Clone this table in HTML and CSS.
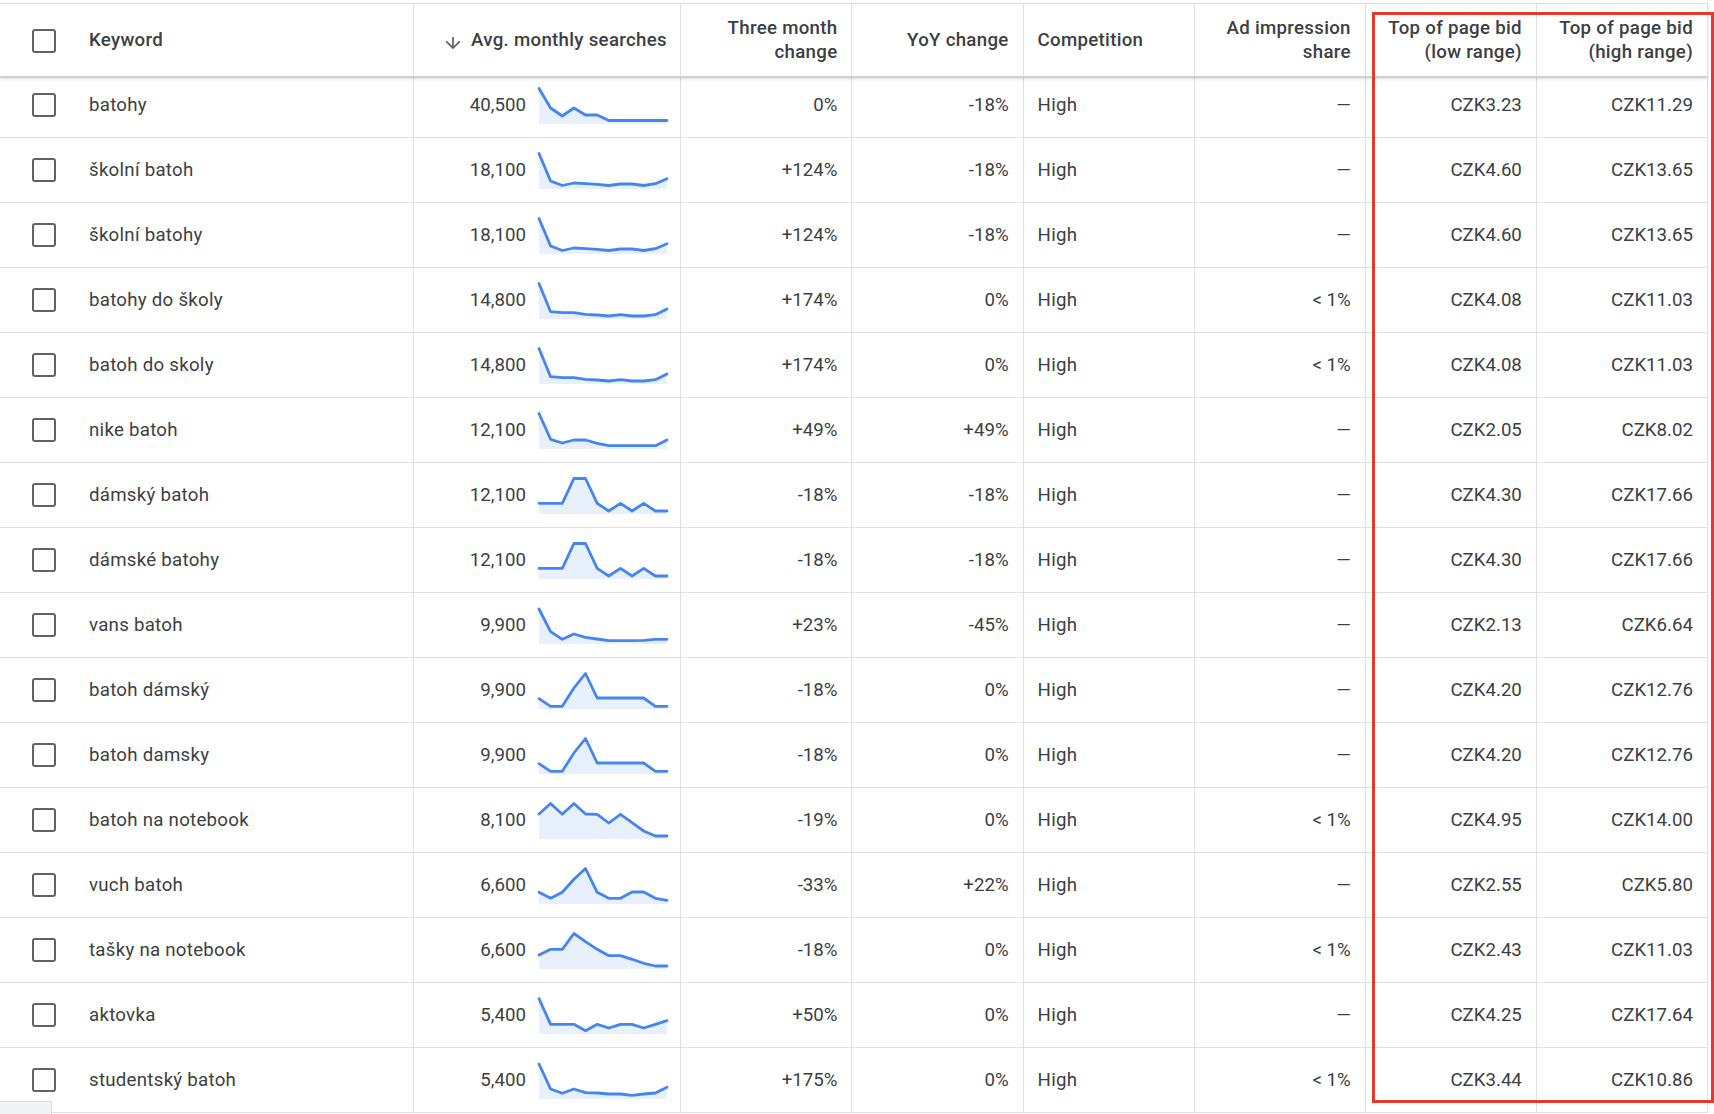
FILE: index.html
```html
<!DOCTYPE html>
<html lang="cs">
<head>
<meta charset="utf-8">
<title>Keyword ideas</title>
<link rel="stylesheet" href="styles.css">
</head>
<body>
<div class="page">
  <div class="table">
    <div class="row head">
      <div class="cell kw"><span class="cb"></span><span>Keyword</span></div>
      <div class="cell num avg"><svg class="sort" viewBox="0 0 16 12"><path d="M8 0V10.8M1.2 4.3L8 11.1L14.8 4.3"/></svg><span>Avg. monthly searches</span></div>
      <div class="cell num">Three month<br>change</div>
      <div class="cell num">YoY change</div>
      <div class="cell">Competition</div>
      <div class="cell num">Ad impression<br>share</div>
      <div class="cell num">Top of page bid<br>(low range)</div>
      <div class="cell num">Top of page bid<br>(high range)</div>
    </div>

    <div class="row r">
      <div class="cell kw"><span class="cb"></span><span>batohy</span></div>
      <div class="cell num avg"><span>40,500</span><svg class="spark" viewBox="0 0 128 36"><polygon class="area" points="0,0.5 11.6,20 23.3,28 34.9,20 46.5,27 58.2,27 69.8,32.5 81.5,32.5 93.1,32.5 104.7,32.5 116.4,32.5 128,32.5 128,36 0,36"/><polyline class="line" points="0,0.5 11.6,20 23.3,28 34.9,20 46.5,27 58.2,27 69.8,32.5 81.5,32.5 93.1,32.5 104.7,32.5 116.4,32.5 128,32.5"/></svg></div>
      <div class="cell num">0%</div>
      <div class="cell num">-18%</div>
      <div class="cell comp">High</div>
      <div class="cell num">—</div>
      <div class="cell num">CZK3.23</div>
      <div class="cell num">CZK11.29</div>
    </div>

    <div class="row r">
      <div class="cell kw"><span class="cb"></span><span>školní batoh</span></div>
      <div class="cell num avg"><span>18,100</span><svg class="spark" viewBox="0 0 128 36"><polygon class="area" points="0,0.5 11.6,28 23.3,32.5 34.9,30 46.5,30.7 58.2,31.3 69.8,32.5 81.5,31 93.1,31 104.7,32.5 116.4,30.7 128,25.7 128,36 0,36"/><polyline class="line" points="0,0.5 11.6,28 23.3,32.5 34.9,30 46.5,30.7 58.2,31.3 69.8,32.5 81.5,31 93.1,31 104.7,32.5 116.4,30.7 128,25.7"/></svg></div>
      <div class="cell num">+124%</div>
      <div class="cell num">-18%</div>
      <div class="cell comp">High</div>
      <div class="cell num">—</div>
      <div class="cell num">CZK4.60</div>
      <div class="cell num">CZK13.65</div>
    </div>

    <div class="row r">
      <div class="cell kw"><span class="cb"></span><span>školní batohy</span></div>
      <div class="cell num avg"><span>18,100</span><svg class="spark" viewBox="0 0 128 36"><polygon class="area" points="0,0.5 11.6,28 23.3,32.5 34.9,30 46.5,30.7 58.2,31.3 69.8,32.5 81.5,31 93.1,31 104.7,32.5 116.4,30.7 128,25.7 128,36 0,36"/><polyline class="line" points="0,0.5 11.6,28 23.3,32.5 34.9,30 46.5,30.7 58.2,31.3 69.8,32.5 81.5,31 93.1,31 104.7,32.5 116.4,30.7 128,25.7"/></svg></div>
      <div class="cell num">+124%</div>
      <div class="cell num">-18%</div>
      <div class="cell comp">High</div>
      <div class="cell num">—</div>
      <div class="cell num">CZK4.60</div>
      <div class="cell num">CZK13.65</div>
    </div>

    <div class="row r">
      <div class="cell kw"><span class="cb"></span><span>batohy do školy</span></div>
      <div class="cell num avg"><span>14,800</span><svg class="spark" viewBox="0 0 128 36"><polygon class="area" points="0,0.5 11.6,28.7 23.3,29.7 34.9,29.7 46.5,31.3 58.2,32 69.8,33 81.5,31.7 93.1,33 104.7,33 116.4,31.7 128,26 128,36 0,36"/><polyline class="line" points="0,0.5 11.6,28.7 23.3,29.7 34.9,29.7 46.5,31.3 58.2,32 69.8,33 81.5,31.7 93.1,33 104.7,33 116.4,31.7 128,26"/></svg></div>
      <div class="cell num">+174%</div>
      <div class="cell num">0%</div>
      <div class="cell comp">High</div>
      <div class="cell num">&lt; 1%</div>
      <div class="cell num">CZK4.08</div>
      <div class="cell num">CZK11.03</div>
    </div>

    <div class="row r">
      <div class="cell kw"><span class="cb"></span><span>batoh do skoly</span></div>
      <div class="cell num avg"><span>14,800</span><svg class="spark" viewBox="0 0 128 36"><polygon class="area" points="0,0.5 11.6,28.7 23.3,29.7 34.9,29.7 46.5,31.3 58.2,32 69.8,33 81.5,31.7 93.1,33 104.7,33 116.4,31.7 128,26 128,36 0,36"/><polyline class="line" points="0,0.5 11.6,28.7 23.3,29.7 34.9,29.7 46.5,31.3 58.2,32 69.8,33 81.5,31.7 93.1,33 104.7,33 116.4,31.7 128,26"/></svg></div>
      <div class="cell num">+174%</div>
      <div class="cell num">0%</div>
      <div class="cell comp">High</div>
      <div class="cell num">&lt; 1%</div>
      <div class="cell num">CZK4.08</div>
      <div class="cell num">CZK11.03</div>
    </div>

    <div class="row r">
      <div class="cell kw"><span class="cb"></span><span>nike batoh</span></div>
      <div class="cell num avg"><span>12,100</span><svg class="spark" viewBox="0 0 128 36"><polygon class="area" points="0,0.5 11.6,26.3 23.3,30 34.9,27 46.5,27 58.2,30.3 69.8,32.7 81.5,32.7 93.1,32.7 104.7,32.7 116.4,32.7 128,27 128,36 0,36"/><polyline class="line" points="0,0.5 11.6,26.3 23.3,30 34.9,27 46.5,27 58.2,30.3 69.8,32.7 81.5,32.7 93.1,32.7 104.7,32.7 116.4,32.7 128,27"/></svg></div>
      <div class="cell num">+49%</div>
      <div class="cell num">+49%</div>
      <div class="cell comp">High</div>
      <div class="cell num">—</div>
      <div class="cell num">CZK2.05</div>
      <div class="cell num">CZK8.02</div>
    </div>

    <div class="row r">
      <div class="cell kw"><span class="cb"></span><span>dámský batoh</span></div>
      <div class="cell num avg"><span>12,100</span><svg class="spark" viewBox="0 0 128 36"><polygon class="area" points="0,25.3 11.6,25.3 23.3,25.3 34.9,0.5 46.5,0.5 58.2,25.3 69.8,33 81.5,25.3 93.1,33 104.7,25.3 116.4,33 128,33 128,36 0,36"/><polyline class="line" points="0,25.3 11.6,25.3 23.3,25.3 34.9,0.5 46.5,0.5 58.2,25.3 69.8,33 81.5,25.3 93.1,33 104.7,25.3 116.4,33 128,33"/></svg></div>
      <div class="cell num">-18%</div>
      <div class="cell num">-18%</div>
      <div class="cell comp">High</div>
      <div class="cell num">—</div>
      <div class="cell num">CZK4.30</div>
      <div class="cell num">CZK17.66</div>
    </div>

    <div class="row r">
      <div class="cell kw"><span class="cb"></span><span>dámské batohy</span></div>
      <div class="cell num avg"><span>12,100</span><svg class="spark" viewBox="0 0 128 36"><polygon class="area" points="0,25.3 11.6,25.3 23.3,25.3 34.9,0.5 46.5,0.5 58.2,25.3 69.8,33 81.5,25.3 93.1,33 104.7,25.3 116.4,33 128,33 128,36 0,36"/><polyline class="line" points="0,25.3 11.6,25.3 23.3,25.3 34.9,0.5 46.5,0.5 58.2,25.3 69.8,33 81.5,25.3 93.1,33 104.7,25.3 116.4,33 128,33"/></svg></div>
      <div class="cell num">-18%</div>
      <div class="cell num">-18%</div>
      <div class="cell comp">High</div>
      <div class="cell num">—</div>
      <div class="cell num">CZK4.30</div>
      <div class="cell num">CZK17.66</div>
    </div>

    <div class="row r">
      <div class="cell kw"><span class="cb"></span><span>vans batoh</span></div>
      <div class="cell num avg"><span>9,900</span><svg class="spark" viewBox="0 0 128 36"><polygon class="area" points="0,1 11.6,23.7 23.3,31.3 34.9,26 46.5,29.3 58.2,31 69.8,32.7 81.5,32.7 93.1,32.7 104.7,32.3 116.4,31.3 128,31.3 128,36 0,36"/><polyline class="line" points="0,1 11.6,23.7 23.3,31.3 34.9,26 46.5,29.3 58.2,31 69.8,32.7 81.5,32.7 93.1,32.7 104.7,32.3 116.4,31.3 128,31.3"/></svg></div>
      <div class="cell num">+23%</div>
      <div class="cell num">-45%</div>
      <div class="cell comp">High</div>
      <div class="cell num">—</div>
      <div class="cell num">CZK2.13</div>
      <div class="cell num">CZK6.64</div>
    </div>

    <div class="row r">
      <div class="cell kw"><span class="cb"></span><span>batoh dámský</span></div>
      <div class="cell num avg"><span>9,900</span><svg class="spark" viewBox="0 0 128 36"><polygon class="area" points="0,25.7 11.6,33.3 23.3,33.3 34.9,15 46.5,0.5 58.2,25 69.8,25 81.5,25 93.1,25 104.7,25 116.4,33.3 128,33.3 128,36 0,36"/><polyline class="line" points="0,25.7 11.6,33.3 23.3,33.3 34.9,15 46.5,0.5 58.2,25 69.8,25 81.5,25 93.1,25 104.7,25 116.4,33.3 128,33.3"/></svg></div>
      <div class="cell num">-18%</div>
      <div class="cell num">0%</div>
      <div class="cell comp">High</div>
      <div class="cell num">—</div>
      <div class="cell num">CZK4.20</div>
      <div class="cell num">CZK12.76</div>
    </div>

    <div class="row r">
      <div class="cell kw"><span class="cb"></span><span>batoh damsky</span></div>
      <div class="cell num avg"><span>9,900</span><svg class="spark" viewBox="0 0 128 36"><polygon class="area" points="0,25.7 11.6,33.3 23.3,33.3 34.9,15 46.5,0.5 58.2,25 69.8,25 81.5,25 93.1,25 104.7,25 116.4,33.3 128,33.3 128,36 0,36"/><polyline class="line" points="0,25.7 11.6,33.3 23.3,33.3 34.9,15 46.5,0.5 58.2,25 69.8,25 81.5,25 93.1,25 104.7,25 116.4,33.3 128,33.3"/></svg></div>
      <div class="cell num">-18%</div>
      <div class="cell num">0%</div>
      <div class="cell comp">High</div>
      <div class="cell num">—</div>
      <div class="cell num">CZK4.20</div>
      <div class="cell num">CZK12.76</div>
    </div>

    <div class="row r">
      <div class="cell kw"><span class="cb"></span><span>batoh na notebook</span></div>
      <div class="cell num avg"><span>8,100</span><svg class="spark" viewBox="0 0 128 36"><polygon class="area" points="0,11 11.6,0.5 23.3,11.3 34.9,0.5 46.5,11 58.2,11.3 69.8,20 81.5,11.3 93.1,19.7 104.7,28 116.4,33 128,33 128,36 0,36"/><polyline class="line" points="0,11 11.6,0.5 23.3,11.3 34.9,0.5 46.5,11 58.2,11.3 69.8,20 81.5,11.3 93.1,19.7 104.7,28 116.4,33 128,33"/></svg></div>
      <div class="cell num">-19%</div>
      <div class="cell num">0%</div>
      <div class="cell comp">High</div>
      <div class="cell num">&lt; 1%</div>
      <div class="cell num">CZK4.95</div>
      <div class="cell num">CZK14.00</div>
    </div>

    <div class="row r">
      <div class="cell kw"><span class="cb"></span><span>vuch batoh</span></div>
      <div class="cell num avg"><span>6,600</span><svg class="spark" viewBox="0 0 128 36"><polygon class="area" points="0,24.3 11.6,30.3 23.3,24.3 34.9,11.3 46.5,0.5 58.2,24.3 69.8,30.3 81.5,30.3 93.1,24 104.7,24 116.4,30.3 128,32.3 128,36 0,36"/><polyline class="line" points="0,24.3 11.6,30.3 23.3,24.3 34.9,11.3 46.5,0.5 58.2,24.3 69.8,30.3 81.5,30.3 93.1,24 104.7,24 116.4,30.3 128,32.3"/></svg></div>
      <div class="cell num">-33%</div>
      <div class="cell num">+22%</div>
      <div class="cell comp">High</div>
      <div class="cell num">—</div>
      <div class="cell num">CZK2.55</div>
      <div class="cell num">CZK5.80</div>
    </div>

    <div class="row r">
      <div class="cell kw"><span class="cb"></span><span>tašky na notebook</span></div>
      <div class="cell num avg"><span>6,600</span><svg class="spark" viewBox="0 0 128 36"><polygon class="area" points="0,22 11.6,16.3 23.3,16.3 34.9,0.5 46.5,8.7 58.2,16.3 69.8,22.7 81.5,22.7 93.1,26.3 104.7,30.3 116.4,33 128,33 128,36 0,36"/><polyline class="line" points="0,22 11.6,16.3 23.3,16.3 34.9,0.5 46.5,8.7 58.2,16.3 69.8,22.7 81.5,22.7 93.1,26.3 104.7,30.3 116.4,33 128,33"/></svg></div>
      <div class="cell num">-18%</div>
      <div class="cell num">0%</div>
      <div class="cell comp">High</div>
      <div class="cell num">&lt; 1%</div>
      <div class="cell num">CZK2.43</div>
      <div class="cell num">CZK11.03</div>
    </div>

    <div class="row r">
      <div class="cell kw"><span class="cb"></span><span>aktovka</span></div>
      <div class="cell num avg"><span>5,400</span><svg class="spark" viewBox="0 0 128 36"><polygon class="area" points="0,0.7 11.6,26.3 23.3,26.3 34.9,26.3 46.5,32.7 58.2,26.3 69.8,30 81.5,26.3 93.1,26.3 104.7,30 116.4,26.3 128,22.7 128,36 0,36"/><polyline class="line" points="0,0.7 11.6,26.3 23.3,26.3 34.9,26.3 46.5,32.7 58.2,26.3 69.8,30 81.5,26.3 93.1,26.3 104.7,30 116.4,26.3 128,22.7"/></svg></div>
      <div class="cell num">+50%</div>
      <div class="cell num">0%</div>
      <div class="cell comp">High</div>
      <div class="cell num">—</div>
      <div class="cell num">CZK4.25</div>
      <div class="cell num">CZK17.64</div>
    </div>

    <div class="row r">
      <div class="cell kw"><span class="cb"></span><span>studentský batoh</span></div>
      <div class="cell num avg"><span>5,400</span><svg class="spark" viewBox="0 0 128 36"><polygon class="area" points="0,1 11.6,26 23.3,30.3 34.9,26 46.5,29.7 58.2,30 69.8,31 81.5,31 93.1,32.3 104.7,31 116.4,30 128,24.3 128,36 0,36"/><polyline class="line" points="0,1 11.6,26 23.3,30.3 34.9,26 46.5,29.7 58.2,30 69.8,31 81.5,31 93.1,32.3 104.7,31 116.4,30 128,24.3"/></svg></div>
      <div class="cell num">+175%</div>
      <div class="cell num">0%</div>
      <div class="cell comp">High</div>
      <div class="cell num">&lt; 1%</div>
      <div class="cell num">CZK3.44</div>
      <div class="cell num">CZK10.86</div>
    </div>
  </div>
</div>
<div class="highlight"></div>
<div class="corner"></div>
</body>
</html>
```

FILE: styles.css
```css
* { box-sizing: border-box; }

html, body {
  margin: 0;
  padding: 0;
  background: #ffffff;
}

body {
  width: 1714px;
  height: 1114px;
  overflow: hidden;
  position: relative;
  font-family: Roboto, "Noto Sans", "Liberation Sans", Arial, sans-serif;
  font-size: 18.67px;
  color: #3c4043;
}

.page {
  padding-top: 3px;
}

.table {
  width: 1708px;
}

.row {
  display: grid;
  grid-template-columns: 414px 267.4px repeat(6, 171.1px);
}

.cell {
  display: flex;
  align-items: center;
  padding: 2px 14px 0;
  border-right: 1px solid #e0e0e0;
  white-space: nowrap;
  line-height: 23.33px;
}

.num {
  justify-content: flex-end;
  text-align: right;
}

.head {
  height: 75px;
  border-top: 1px solid #e0e0e0;
  border-bottom: 2px solid #cdcfd2;
  box-shadow: 0 1px 3px rgba(60, 64, 67, 0.18);
  background: #ffffff;
  position: relative;
  z-index: 1;
  margin-bottom: -5px;
}

.head .cell {
  font-weight: 500;
  color: #3c4043;
  letter-spacing: 0.3px;
  padding-top: 1px;
}

.r {
  height: 65px;
  border-bottom: 1px solid #e0e0e0;
}

.kw {
  padding-left: 32px;
}

.r .kw span:last-child,
.r .comp {
  letter-spacing: 0.27px;
}

.cb {
  flex: none;
  width: 24px;
  height: 24px;
  border: 2.67px solid #5f6368;
  border-radius: 3px;
  margin-right: 33px;
}

.r .cb {
  margin-top: -2px;
}

.avg {
  padding-right: 13.5px;
}

.sort {
  flex: none;
  width: 16px;
  height: 12px;
  margin-right: 10px;
  margin-top: 5px;
  fill: none;
  stroke: #5f6368;
  stroke-width: 1.7;
  overflow: visible;
}

.spark {
  flex: none;
  width: 128px;
  height: 36px;
  margin-left: 13px;
  margin-top: 0;
  overflow: visible;
}

.spark .area {
  fill: #e8f0fe;
}

.spark .line {
  fill: none;
  stroke: #4585f2;
  stroke-width: 2.8;
  stroke-linejoin: round;
  stroke-linecap: round;
}

.highlight {
  position: absolute;
  left: 1371.5px;
  top: 11.5px;
  width: 342px;
  height: 1091px;
  border: 3.5px solid #e5392a;
  pointer-events: none;
  z-index: 2;
}

.corner {
  position: absolute;
  left: 0;
  top: 1101px;
  width: 52px;
  height: 13px;
  background: #f1f3f4;
  border-top: 1px solid #dadce0;
  border-right: 1px solid #dadce0;
  z-index: 2;
}
```
